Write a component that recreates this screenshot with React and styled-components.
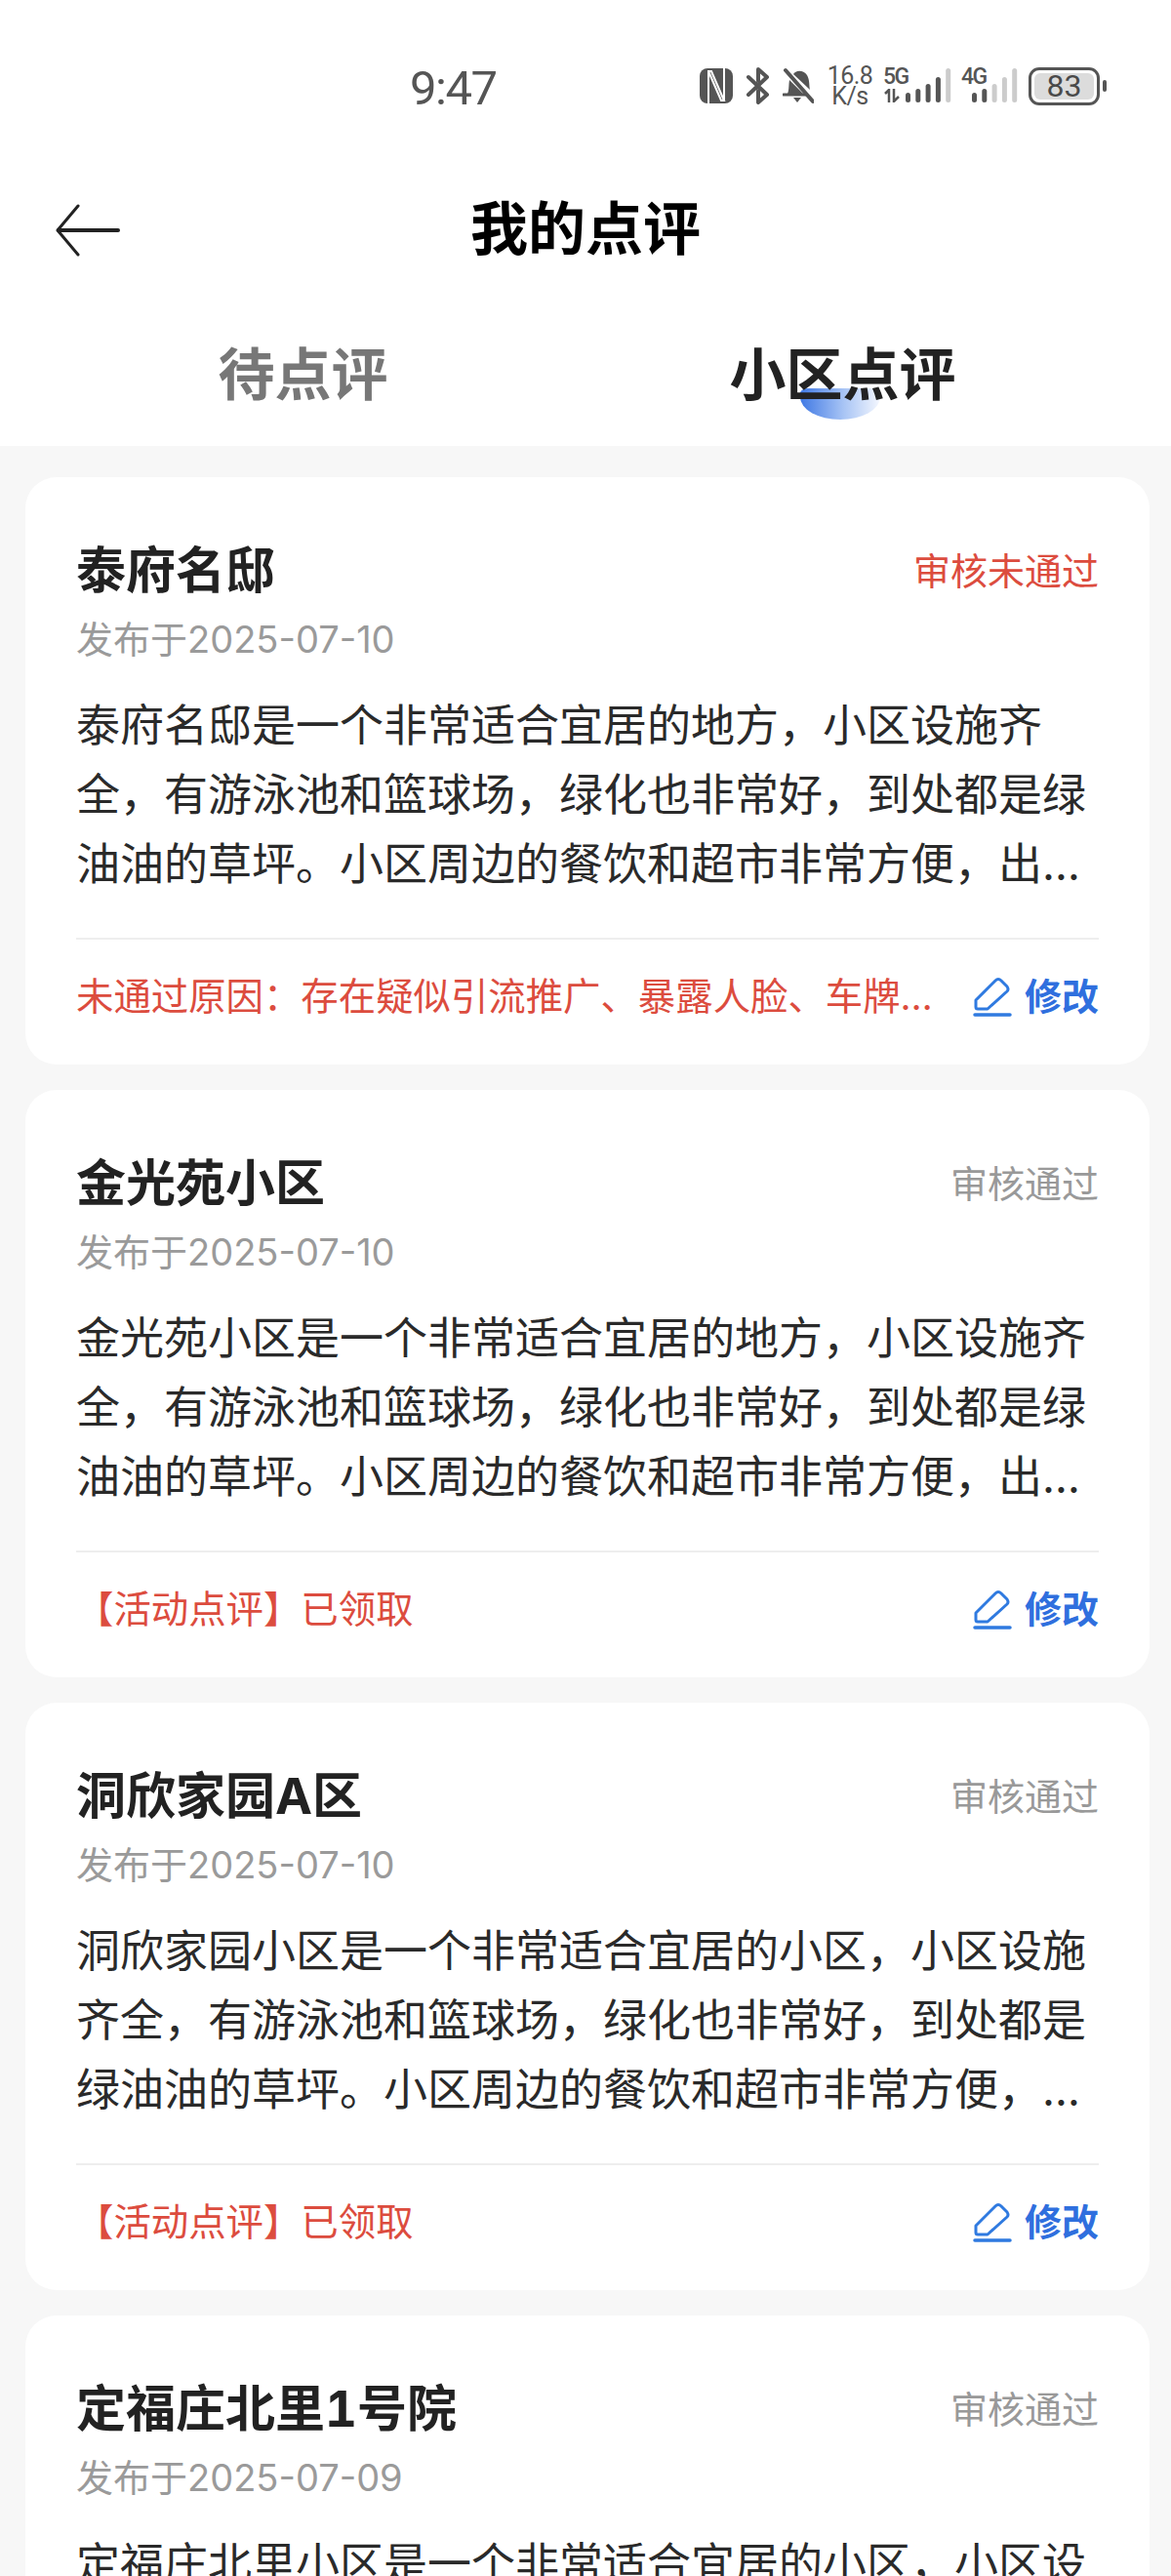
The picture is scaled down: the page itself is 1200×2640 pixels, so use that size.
import React from 'react'
import styled, { createGlobalStyle } from 'styled-components'

const GlobalStyle = createGlobalStyle`
    html, body {
        margin: 0;
        padding: 0;
        background: #f7f7f7;
    }
    body {
        font-family: Inter, "Noto Sans CJK SC", "Noto Sans", sans-serif;
    }
`

const Page = styled.div`
    width: 1200px;
    height: 2640px;
    overflow: hidden;
    background: #f7f7f7;
`
const Top = styled.div`
    background: #fff;
`
const StatusBar = styled.div`
    height: 160px;
    padding: 52px 66px 0 420px;
    box-sizing: border-box;
    display: flex;
    align-items: flex-start;
    justify-content: space-between;
    color: #555;
`
const Time = styled.div`
    margin-top: 3px;
    font-family: Roboto, sans-serif;
    font-size: 49px;
    line-height: 72px;
    letter-spacing: -1.5px;
`
const StatusIcons = styled.div`
    display: flex;
    align-items: center;
    height: 72px;
`
const Speed = styled.div`
    width: 48px;
    margin: 0 10px 0 13px;
    font-family: Roboto, sans-serif;
    font-size: 25px;
    line-height: 21px;
    letter-spacing: -0.5px;
    text-align: center;
    white-space: nowrap;
`
const NetGroup = styled.div`
    position: relative;
    display: flex;
    align-items: flex-end;
    justify-content: flex-end;
    height: 37px;
    width: ${p => p.$w}px;
    margin-right: ${p => p.$mr}px;
`
const NetLabel = styled.span`
    position: absolute;
    left: 0;
    top: -1px;
    font-family: Roboto, sans-serif;
    font-size: 23px;
    line-height: 20px;
    font-weight: 500;
    letter-spacing: -1.5px;
`
const Battery = styled.div`
    position: relative;
    width: 73px;
    height: 39px;
    box-sizing: border-box;
    border: 3px solid #555;
    border-radius: 11px;
    padding: 3px;
`
const BatteryFill = styled.div`
    height: 100%;
    border-radius: 6px;
    background: #dcdcdc;
    font-family: Roboto, sans-serif;
    font-size: 32px;
    line-height: 27px;
    text-align: center;
    color: #4a4a4a;
`
const BatteryNub = styled.div`
    width: 4px;
    height: 12px;
    margin-left: 3px;
    border-radius: 2px;
    background: #555;
`
const Header = styled.div`
    height: 150px;
    box-sizing: border-box;
    display: flex;
    align-items: center;
    justify-content: center;
    position: relative;
`
const BackButton = styled.div`
    position: absolute;
    left: 56px;
    top: 48px;
    display: flex;
`
const Title = styled.h1`
    margin: 0;
    font-size: 59px;
    line-height: 70px;
    font-weight: 700;
    color: #000;
`
const Tabs = styled.div`
    height: 147px;
    padding-left: 34px;
    box-sizing: border-box;
    display: grid;
    grid-template-columns: 553px 553px;
    align-items: center;
    justify-items: center;
`
const Tab = styled.div`
    position: relative;
    font-size: 58px;
    line-height: 72px;
    font-weight: 700;
    color: ${p => (p.$active ? '#222' : '#777')};
`
const TabLabel = styled.span`
    position: relative;
`
const TabMark = styled.span`
    position: absolute;
    left: 73px;
    top: 50px;
    width: 82px;
    height: 32px;
    border-radius: 10px 10px 50px 50px / 6px 6px 28px 28px;
    background: linear-gradient(90deg, #4079e4 0%, #a9c5f5 55%, #f4f7fe 100%);
`
const List = styled.div`
    padding: 32px 22px 0 26px;
    display: flex;
    flex-direction: column;
    gap: 26px;
`
const Card = styled.div`
    height: 602px;
    flex: none;
    box-sizing: border-box;
    padding: 61px 52px 34px 52px;
    background: #fff;
    border-radius: 32px;
`
const CardTop = styled.div`
    display: flex;
    justify-content: space-between;
    align-items: flex-start;
`
const Name = styled.div`
    font-size: 51px;
    line-height: 70px;
    font-weight: 700;
    font-variant-numeric: tabular-nums;
    color: #222;
`
const Status = styled.div`
    font-size: 38px;
    line-height: 70px;
    color: ${p => (p.$rejected ? '#dc4c3e' : '#999')};
`
const Published = styled.div`
    font-size: 38px;
    line-height: 70px;
    color: #9a9a9a;
`
const Body = styled.div`
    margin-top: 18px;
    font-size: 45px;
    line-height: 71px;
    color: #2a2a2a;
    display: -webkit-box;
    -webkit-box-orient: vertical;
    -webkit-line-clamp: 3;
    overflow: hidden;
`
const CardFoot = styled.div`
    margin-top: 40px;
    padding-top: 20px;
    border-top: 2px solid #eee;
    display: flex;
    align-items: center;
    justify-content: space-between;
    height: 76px;
    gap: 24px;
`
const Note = styled.div`
    flex: 1;
    min-width: 0;
    font-size: 38.4px;
    line-height: 60px;
    color: #dc4c3e;
    white-space: nowrap;
    overflow: hidden;
    text-overflow: ellipsis;
`
const EditButton = styled.div`
    flex: none;
    display: flex;
    align-items: center;
    gap: 13px;
    font-size: 38px;
    line-height: 60px;
    font-weight: 700;
    color: #2f6fde;
`

const BackIcon = () => (
    <svg width="68" height="56" viewBox="0 0 68 56" fill="none" stroke="#222" strokeLinecap="round" strokeLinejoin="round">
        <path d="M24 3 L3 28 L24 53" strokeWidth="3" />
        <path d="M4 28 H65" strokeWidth="4" />
    </svg>
)

const NfcIcon = () => (
    <svg width="34" height="36" viewBox="0 0 34 36" style={{ marginRight: 13 }}>
        <rect x="0" y="0" width="34" height="36" rx="8" fill="#555" />
        <path d="M9 36 V3 H12 L25 33 H22 L9 3 M25 33 V0" fill="none" stroke="#fff" strokeWidth="2" />
    </svg>
)

const BluetoothIcon = () => (
    <svg width="25" height="38" viewBox="0 0 25 38" fill="none" stroke="#555" strokeWidth="4" strokeLinejoin="round" strokeLinecap="round" style={{ marginRight: 13 }}>
        <path d="M3 10 L22 28 L13 36 V24 M13 14 V2 L22 10 L3 28" />
    </svg>
)

const MuteIcon = () => (
    <svg width="32" height="38" viewBox="0 0 32 38">
        <path d="M4 29 C7 25 6 18 7 13 L23 29 Z M11 7 C13 3 21 2 25 8 C28 13 27 19 28 23 Z" fill="#555" />
        <path d="M1 28 H25" stroke="#555" strokeWidth="3" strokeLinecap="round" />
        <path d="M11 31 H19 L15 36 Z" fill="#555" />
        <path d="M3 3 L31 35" stroke="#555" strokeWidth="4" strokeLinecap="round" />
    </svg>
)

// up and down data arrows under the 5G label
const DataArrows = () => (
    <svg width="16" height="14" viewBox="0 0 16 14" fill="none" stroke="#555" strokeWidth="2.5" style={{ position: 'absolute', left: 1, bottom: 2 }}>
        <path d="M1 5 L5 1 V14" />
        <path d="M10 0 V13 L15 8" />
    </svg>
)

// bars of the signal meter, left to right
const SignalBars = ({ bars }) => (
    <svg width="47" height="37" viewBox="0 0 47 37">
        {bars.map((b, i) => (
            <rect key={i} x={i * 10.3} y={35 - b.h} width="5" height={b.h} rx="2.5" fill={b.on ? '#555' : '#ccc'} />
        ))}
    </svg>
)

const bars5g = [{ h: 10, on: true }, { h: 14, on: true }, { h: 19, on: true }, { h: 26, on: true }, { h: 35, on: false }]
const bars4g = [{ h: 10, on: true }, { h: 14, on: true }, { h: 19, on: false }, { h: 26, on: false }, { h: 35, on: false }]

const PenIcon = () => (
    <svg width="40" height="41" viewBox="0 0 40 41" fill="none" stroke="#2f7ae0" strokeLinejoin="round" strokeLinecap="round">
        <path d="M3 24 L23 4 Q26 1 29 4 L35 10 Q37 13 35 15 L15 33 H5 Q3 33 3 31 Z" strokeWidth="3" />
        <path d="M2 39 H38" strokeWidth="3.5" />
    </svg>
)

const tail = '有游泳池和篮球场，绿化也非常好，到处都是绿油油的草坪。小区周边的餐饮和超市非常方便，出行也很便利，交通四通八达。'

const reviews = [
    {
        name: '泰府名邸',
        status: '审核未通过',
        rejected: true,
        date: '2025-07-10',
        body: `泰府名邸是一个非常适合宜居的地方，小区设施齐全，${tail}`,
        note: '未通过原因：存在疑似引流推广、暴露人脸、车牌等违规内容，请修改后重新提交',
    },
    {
        name: '金光苑小区',
        status: '审核通过',
        date: '2025-07-10',
        body: `金光苑小区是一个非常适合宜居的地方，小区设施齐全，${tail}`,
        note: '【活动点评】已领取',
    },
    {
        name: '洞欣家园A区',
        status: '审核通过',
        date: '2025-07-10',
        body: `洞欣家园小区是一个非常适合宜居的小区，小区设施齐全，${tail}`,
        note: '【活动点评】已领取',
    },
    {
        name: '定福庄北里1号院',
        status: '审核通过',
        date: '2025-07-09',
        body: `定福庄北里小区是一个非常适合宜居的小区，小区设施齐全，${tail}`,
        note: '【活动点评】已领取',
    },
]

const App = () => {
    return (
        <Page>
            <GlobalStyle />
            <Top>
                <StatusBar>
                    <Time>9:47</Time>
                    <StatusIcons>
                        <NfcIcon />
                        <BluetoothIcon />
                        <MuteIcon />
                        <Speed>16.8<br />K/s</Speed>
                        <NetGroup $w={70} $mr={10}>
                            <NetLabel>5G</NetLabel>
                            <DataArrows />
                            <SignalBars bars={bars5g} />
                        </NetGroup>
                        <NetGroup $w={58} $mr={11}>
                            <NetLabel>4G</NetLabel>
                            <SignalBars bars={bars4g} />
                        </NetGroup>
                        <Battery>
                            <BatteryFill>83</BatteryFill>
                        </Battery>
                        <BatteryNub />
                    </StatusIcons>
                </StatusBar>
                <Header>
                    <BackButton><BackIcon /></BackButton>
                    <Title>我的点评</Title>
                </Header>
                <Tabs>
                    <Tab>待点评</Tab>
                    <Tab $active>
                        <TabMark />
                        <TabLabel>小区点评</TabLabel>
                    </Tab>
                </Tabs>
            </Top>
            <List>
                {reviews.map(r => (
                    <Card key={r.name}>
                        <CardTop>
                            <Name>{r.name}</Name>
                            <Status $rejected={r.rejected}>{r.status}</Status>
                        </CardTop>
                        <Published>发布于{r.date}</Published>
                        <Body>{r.body}</Body>
                        <CardFoot>
                            <Note>{r.note}</Note>
                            <EditButton><PenIcon />修改</EditButton>
                        </CardFoot>
                    </Card>
                ))}
            </List>
        </Page>
    )
}

export default App
